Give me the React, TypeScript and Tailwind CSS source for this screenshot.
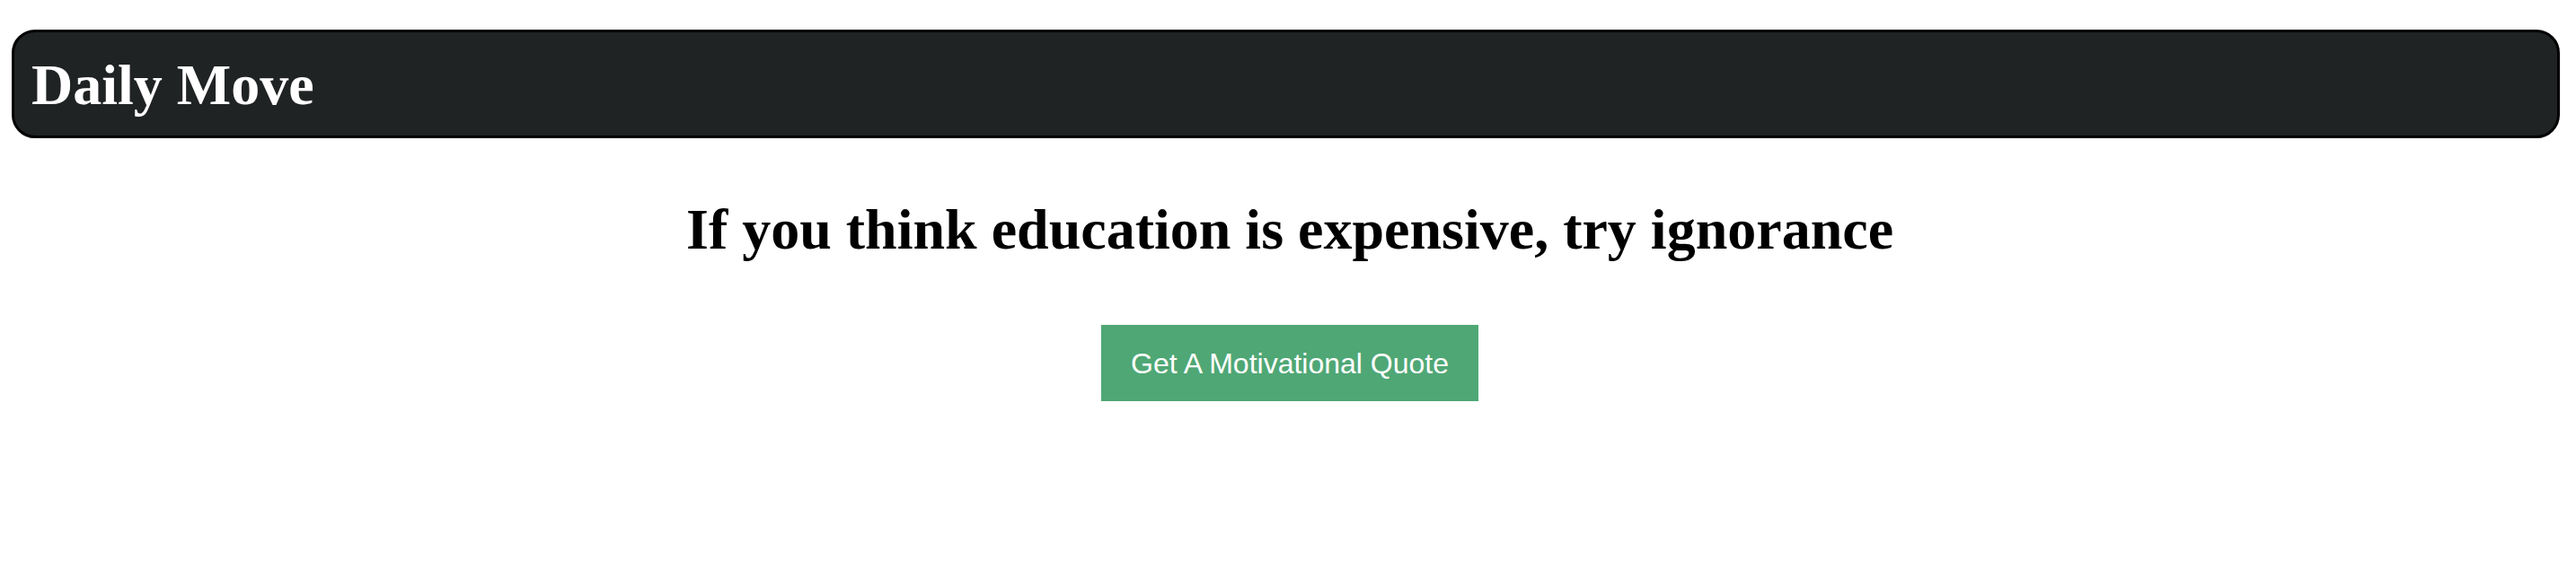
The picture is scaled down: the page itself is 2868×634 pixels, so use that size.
export default function App() {
  return (
    <div className="min-h-screen bg-white pt-[33px]" style={{ fontFamily: '"Liberation Serif", "Times New Roman", serif' }}>
      <header className="ml-[13px] mr-[18px] rounded-[26px] border-[3px] border-black bg-[#202324] pl-[19px] pt-[22px] pb-[19px]">
        <h1 className="text-[64px] leading-[74px] font-bold text-white">Daily Move</h1>
      </header>
      <main className="flex flex-col items-center pl-[4px]">
        <h2 className="mt-[65px] text-[64px] leading-[74px] font-bold text-black">
          If you think education is expensive, try ignorance
        </h2>
        <button
          className="mt-[69px] h-[85px] bg-[#4fa775] px-[33px] text-[32px] text-white"
          style={{ fontFamily: '"Liberation Sans", Arial, sans-serif' }}
        >
          Get A Motivational Quote
        </button>
      </main>
    </div>
  )
}
